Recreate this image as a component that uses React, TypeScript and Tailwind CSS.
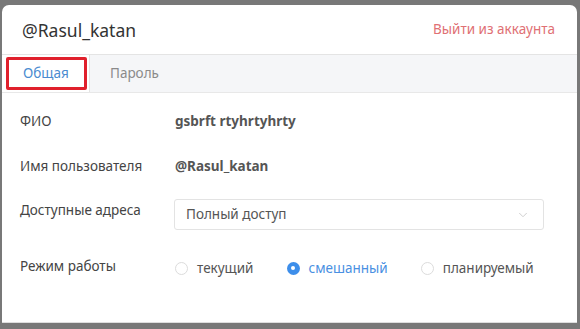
import { ChevronDown } from "lucide-react";

const font = { fontFamily: '"Noto Sans", "Open Sans", sans-serif' };

function Radio({ label, checked }: { label: string; checked?: boolean }) {
  return (
    <label className="flex items-center gap-[9px]">
      {checked ? (
        <span className="flex h-[13px] w-[13px] items-center justify-center rounded-full bg-[#3d8eea]">
          <span className="h-[4px] w-[4px] rounded-full bg-white" />
        </span>
      ) : (
        <span className="h-[13px] w-[13px] rounded-full border border-[#dcdcdc] bg-white" />
      )}
      <span className={checked ? "text-[#4a90e2]" : "text-[#555]"}>{label}</span>
    </label>
  );
}

export default function App() {
  return (
    <div
      className="h-[329px] w-[580px] bg-[#787878] pl-[2px] pt-[5px] text-[13.5px]"
      style={font}
    >
      <div className="h-[318px] w-[575px] rounded-t-[7px] border-b border-[#dedede] bg-white">
        <div className="flex h-[50px] items-center justify-between border-b border-[#e4e4e4] pl-[20px] pr-[22px]">
          <h2 className="pt-[2px] text-[17.5px] text-[#333]">@Rasul_katan</h2>
          <button className="text-[13.5px] text-[#e07074]">Выйти из аккаунта</button>
        </div>
        <div className="flex h-[38px] border-b border-[#e8e8e8] bg-[#f5f6f8]">
          <div className="relative flex w-[88px] items-center border-r border-[#e4e4e4] bg-white pl-[21px] text-[#4a8bd0]">
            Общая
            <div className="absolute left-[4px] top-[2px] h-[33px] w-[81px] rounded-[2px] border-[3px] border-[#e0202c]" />
          </div>
          <div className="flex items-center pl-[20px] text-[#8a8a8a]">Пароль</div>
        </div>
        <div className="pl-[18px] pt-[6px] text-[#444]">
          <div className="flex h-[45px] items-center">
            <div className="w-[155px]">ФИО</div>
            <div className="font-bold text-[#555]">gsbrft rtyhrtyhrty</div>
          </div>
          <div className="flex h-[45px] items-center">
            <div className="w-[155px]">Имя пользователя</div>
            <div className="font-bold text-[#555]">@Rasul_katan</div>
          </div>
          <div className="mt-[10px] flex items-start">
            <div className="w-[154px] pt-[1px]">Доступные адреса</div>
            <div className="flex h-[31px] w-[370px] items-center justify-between rounded-[3px] border border-[#e3e3e3] pl-[11px] pr-[13px] text-[#555]">
              <span>Полный доступ</span>
              <ChevronDown className="h-[14px] w-[14px] text-[#c8c8c8]" strokeWidth={1.5} />
            </div>
          </div>
          <div className="mt-[26px] flex items-start">
            <div className="w-[155px]">Режим работы</div>
            <div className="mt-[2px] flex gap-[33px]">
              <Radio label="текущий" />
              <Radio label="смешанный" checked />
              <Radio label="планируемый" />
            </div>
          </div>
        </div>
      </div>
    </div>
  );
}
